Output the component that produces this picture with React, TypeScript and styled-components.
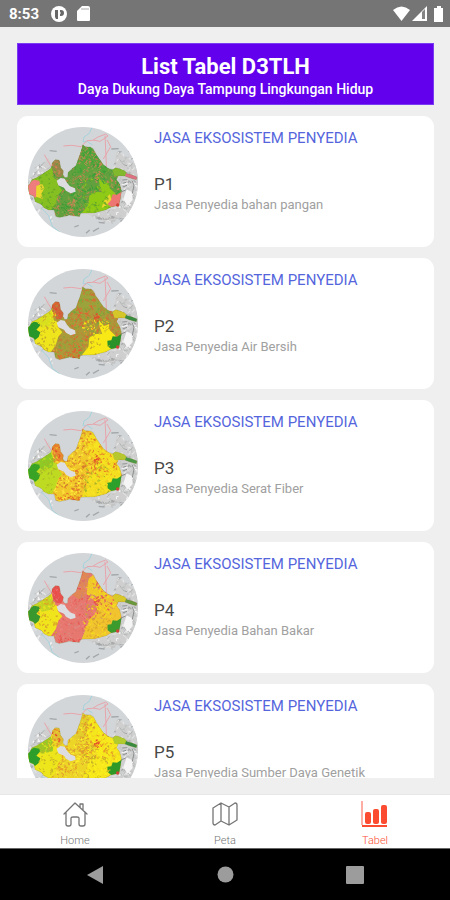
import React from "react";
import styled, { createGlobalStyle } from "styled-components";

const GlobalStyle = createGlobalStyle`
  *, *::before, *::after { box-sizing: border-box; }
  body { margin: 0; background: #efefef; font-family: Roboto, "Liberation Sans", sans-serif; }
  h1, h2, p, ul { margin: 0; padding: 0; }
  button { border: 0; padding: 0; background: none; font: inherit; cursor: pointer; }
`;

const Screen = styled.div`
  display: flex;
  flex-direction: column;
  height: 100vh;
  overflow: hidden;
`;

const StatusBar = styled.header`
  display: flex;
  align-items: center;
  justify-content: space-between;
  height: 27px;
  flex: none;
  padding: 0 6px 0 9px;
  background: #757575;
  color: #fff;
`;

const StatusGroup = styled.div<{ $gap: number }>`
  display: flex;
  align-items: center;
  gap: ${(p) => p.$gap}px;
`;

const Clock = styled.time`
  font-size: 15px;
  line-height: 20px;
  font-weight: 700;
  margin-right: 2px;
`;

const Main = styled.main`
  display: flex;
  flex-direction: column;
  flex: 1;
  min-height: 0;
  padding: 16px 16px 16px 17px;
`;

const Banner = styled.div`
  flex: none;
  padding: 10px 8px 6px;
  background: #6200ee;
  border: 1px solid #7a3cf0;
  color: #fff;
  text-align: center;
`;

const BannerTitle = styled.h1`
  font-size: 22px;
  line-height: 26px;
  font-weight: 700;
`;

const BannerSubtitle = styled.p`
  font-size: 14px;
  line-height: 18px;
  font-weight: 500;
`;

const List = styled.ul`
  display: flex;
  flex-direction: column;
  gap: 11px;
  flex: 1;
  min-height: 0;
  margin-top: 11px;
  overflow: hidden;
  list-style: none;
`;

const Card = styled.li`
  display: flex;
  flex: none;
  gap: 16px;
  padding: 11px 11px 10px;
  background: #fff;
  border-radius: 11px;
`;

const Thumb = styled.svg`
  display: block;
  flex: none;
  width: 110px;
  height: 110px;
  border-radius: 50%;
`;

const CardText = styled.div`
  min-width: 0;
`;

const Category = styled.p`
  font-size: 15px;
  line-height: 22px;
  font-weight: 400;
  color: #5566dd;
`;

const Code = styled.h2`
  margin-top: 24px;
  font-size: 17px;
  line-height: 22px;
  font-weight: 400;
  color: #484848;
`;

const Description = styled.p`
  font-size: 13px;
  line-height: 20px;
  color: #a0a0a0;
`;

const TabBar = styled.nav`
  display: grid;
  grid-template-columns: repeat(3, 1fr);
  flex: none;
  height: 54px;
  background: #fff;
  border-top: 1px solid #e8e8e8;
`;

const Tab = styled.a<{ $active?: boolean }>`
  display: flex;
  flex-direction: column;
  align-items: center;
  gap: 6px;
  padding-top: 5px;
  color: ${(p) => (p.$active ? "#fb4c32" : "#757575")};
  font-size: 11px;
  line-height: 14px;
  font-weight: 300;
  text-decoration: none;
  svg { display: block; width: 28px; height: 28px; }
`;

const SystemNav = styled.footer`
  display: flex;
  align-items: center;
  justify-content: center;
  gap: 82px;
  flex: none;
  height: 52px;
  background: #000;
  border-top: 1px solid #666;
`;

const SystemButton = styled.button`
  width: 48px;
  height: 48px;
  display: grid;
  place-items: center;
`;

type Palette = {
  core: string;
  cores: string[];
  west: string;
  westEdge: string;
  westNorth: string;
  east: string;
  corner: string;
  hook: string;
  tail: string;
  tailEnd: string;
  north: string;
  speckWest: string;
  density: number;
};

const items: { code: string; text: string; palette: Palette }[] = [
  {
    code: "P1",
    text: "Jasa Penyedia bahan pangan",
    palette: {
      core: "#62a03f", cores: ["#3f9c38", "#b3824c", "#7da846", "#c78758", "#37a23b"],
      west: "#86bf22", westEdge: "#ee7c7c", westNorth: "#86bf22", east: "#8fcb16", corner: "#ee7672",
      hook: "#9a8548", tail: "#82b82c", tailEnd: "#df7184", north: "#55a53a", speckWest: "#65a62a", density: 900,
    },
  },
  {
    code: "P2",
    text: "Jasa Penyedia Air Bersih",
    palette: {
      core: "#aa9a3a", cores: ["#d8743a", "#79a63c", "#bc8238", "#8fa63a", "#de6434"],
      west: "#eee51c", westEdge: "#27962b", westNorth: "#c9da20", east: "#f8e916", corner: "#299329",
      hook: "#d0643a", tail: "#d5c62a", tailEnd: "#398b42", north: "#9ca33c", speckWest: "#c6a82b", density: 900,
    },
  },
  {
    code: "P3",
    text: "Jasa Penyedia Serat Fiber",
    palette: {
      core: "#f0c829", cores: ["#e4762a", "#ffe13b", "#cf7a30", "#fff13c", "#e69b25"],
      west: "#bedb22", westEdge: "#39a326", westNorth: "#6ebc29", east: "#f5e51e", corner: "#2d9f2b",
      hook: "#e68a32", tail: "#b7c72e", tailEnd: "#4c9849", north: "#edc92c", speckWest: "#a9b529", density: 900,
    },
  },
  {
    code: "P4",
    text: "Jasa Penyedia Bahan Bakar",
    palette: {
      core: "#e77870", cores: ["#e75955", "#df8881", "#d97169", "#ef807a", "#cf8373"],
      west: "#f0e51d", westEdge: "#38972d", westNorth: "#a9c829", east: "#f4de19", corner: "#3b9b2d",
      hook: "#e9514e", tail: "#d8c828", tailEnd: "#68993c", north: "#e18756", speckWest: "#dba529", density: 500,
    },
  },
  {
    code: "P5",
    text: "Jasa Penyedia Sumber Daya Genetik",
    palette: {
      core: "#edd528", cores: ["#e79a25", "#fff12e", "#dfa02d", "#f2e632", "#d99733"],
      west: "#eee61c", westEdge: "#2c9e29", westNorth: "#65b42b", east: "#faef18", corner: "#2f9928",
      hook: "#e1bd32", tail: "#b1cc2c", tailEnd: "#398b42", north: "#e3cd2b", speckWest: "#c6b127", density: 800,
    },
  },
];

const LAND =
  "M50 228L60 219L66 207L80 201L98 190L112 181L123 173L127 156L136 147L147 148L150 158L151 170L160 181L159 192L164 200L172 200L174 185L186 174L198 165L204 148L210 132L216 112L218 103L226 108L242 109L250 114L258 130L270 148L280 162L294 173L308 177L317 171L330 175L344 180L352 189L365 192L381 199L379 207L360 202L344 196L325 195L320 207L328 218L335 240L331 264L327 284L303 289L288 297L254 306L213 308L208 318L178 314L148 321L137 317L132 298L116 298L102 291L94 281L76 273L71 256L50 248Z";

function makeRandom(seed: number) {
  let state = seed * 7919;
  return () => {
    state = (state * 16807) % 2147483647;
    return state / 2147483647;
  };
}

type Fleck = { d: string; color: string; width: number };

function makeFlecks(seed: number, count: number, colors: string[], box: number[], size: number): Fleck[] {
  const random = makeRandom(seed);
  return Array.from({ length: count }, () => {
    const x = Math.round(box[0] + random() * box[2]);
    const y = Math.round(box[1] + random() * box[3]);
    const step = () => Math.round((random() - 0.5) * size);
    return {
      d: `M${x} ${y}l${step()} ${step()}l${step()} ${step()}`,
      color: colors[Math.floor(random() * colors.length)],
      width: 2 + Math.round(random() * 2),
    };
  });
}

const Flecks = ({ items: flecks }: { items: Fleck[] }) => (
  <>
    {flecks.map((f, i) => (
      <path key={i} d={f.d} stroke={f.color} strokeWidth={f.width} fill="none" />
    ))}
  </>
);

function RegionMap({ code, palette: p, index }: { code: string; palette: Palette; index: number }) {
  const id = `land-${code}`;
  const relief = ["#b3b5b5", "#f4f4f4", "#c2c4c4", "#a4a6a7", "#e4e4e4"];
  const hot = index === 0 ? ["#d98056", "#c98b52"] : index === 3 ? ["#e94c48", "#d8574e"] : ["#e34a2d", "#ef6b25"];
  return (
    <Thumb viewBox="54 49 330 330" role="img" aria-label={`Peta ${code}`}>
      <defs>
        <clipPath id={id}><path d={LAND} /></clipPath>
        <clipPath id={`${id}-east`}><path d="M325 120L390 120L390 330L300 340L240 318L330 285L338 230L305 180Z" /></clipPath>
        <clipPath id={`${id}-west`}><path d="M54 185L125 135L120 175L50 228ZM50 248L105 290L135 330L110 340L50 290Z" /></clipPath>
      </defs>
      <rect x="54" y="49" width="330" height="330" fill="#d3d6d8" />
      <path d="M54 210L116 140L126 170L66 207ZM320 120L390 170L390 305L290 335L230 310L328 290L337 232L310 180Z" fill="#cfcfcf" />
      <g clipPath={`url(#${id}-east)`}><Flecks items={makeFlecks(91, 260, relief, [245, 115, 140, 220], 20)} /></g>
      <g clipPath={`url(#${id}-west)`}><Flecks items={makeFlecks(37, 120, relief, [54, 135, 85, 200], 16)} /></g>
      <path d="M337 208L352 207M338 218L349 215M338 229L351 224M333 244L347 238M366 210L372 223L367 248" stroke="#8c8f91" strokeWidth="3" fill="none" />
      <path d="M340 266L350 236L365 244L368 268L352 285Z" fill="#f5f5f5" />
      <path d="M246 50L238 68L222 79L219 94L231 92L248 103M94 291L116 315L127 347L150 365" stroke="#a5d3dd" strokeWidth="3" fill="none" />
      <path d="M160 106L185 104L213 108L231 90L248 89L264 79L287 70L294 76L270 92L249 88M285 75L288 138L289 169M103 132L115 153L126 171M291 88L302 108L280 145" stroke="#e7a4ac" strokeWidth="3" fill="none" />
      <path d="M119 120L140 122M304 115L326 114M193 349L206 344M228 368L239 358M249 362L267 352M266 335L284 337" stroke="#a2a6a8" strokeWidth="4" />
      <g clipPath={`url(#${id})`}>
        <path d={LAND} fill={p.core} />
        <path d="M180 170L220 100L300 170L278 198L240 160L210 190Z" fill={p.north} />
        <Flecks items={makeFlecks(141 + index * 17, p.density, p.cores, [125, 100, 210, 222], 12)} />
        <path d="M50 220L75 195L125 170L131 202L146 210L143 222L157 239L145 252L137 278L121 300L95 295L50 260Z" fill={p.west} />
        <path d="M50 220L78 195L122 174L131 196L128 218L96 225L84 213Z" fill={p.westNorth} opacity=".6" />
        <path d="M50 220L72 207L88 210L90 219L79 231L91 239L86 253L76 261L50 252Z" fill={p.westEdge} />
        {index < 2 && <path d="M267 203L281 220L294 216L299 232L316 249L326 285L290 308L215 308L235 283L238 255L257 244L277 245L269 224Z" fill={p.east} />}
        {index > 1 && <path d="M235 128L250 114L283 162L320 190L335 225L330 260L287 308L215 308L239 247L262 226L263 203L230 171Z" fill={p.east} opacity=".75" />}
        <Flecks items={makeFlecks(733 + index, index > 1 ? 110 : 0, [p.cores[0], p.cores[4], p.east], [222, 125, 100, 120], 12)} />
        <path d="M292 264L304 263L308 251L321 252L337 242L335 290L307 291L293 281Z" fill={p.corner} />
        <path d="M123 146L154 144L162 185L153 200L139 198L130 185Z" fill={p.hook} />
        <path d="M305 169L330 172L352 185L342 200L313 195Z" fill={p.tail} />
        <path d="M348 187L384 195L380 210L344 199Z" fill={p.tailEnd} />
        {index === 0 && <path d="M79 226L97 219L103 233L94 250L99 265L78 258ZM289 260L300 251L304 267L288 285L275 292L280 275Z" fill="#ead72b" />}
        <Flecks items={makeFlecks(211 + index * 5, 75, [p.speckWest, p.west], [88, 180, 52, 115], 11)} />
        <Flecks items={makeFlecks(311 + index * 5, 75, [p.speckWest, p.east], [222, 200, 75, 105], 11)} />
        <Flecks items={makeFlecks(401, 20, [...hot, p.core], [128, 152, 27, 44], 10)} />
        <Flecks items={makeFlecks(503, index === 0 ? 6 : 12, hot, [256, 183, 18, 25], 9)} />
        <Flecks items={makeFlecks(607, index === 0 ? 6 : 14, hot, [135, 304, 75, 12], 8)} />
      </g>
      <path d={LAND} fill="none" stroke="#6f793a" strokeWidth="1" opacity=".55" />
      <path d="M140 210L152 202L164 204L171 216L180 227L195 233L197 243L182 248L168 240L162 231L145 224Z" fill="#dcdce1" />
      <circle cx="323" cy="283" r="5" fill="#cf4238" />
    </Thumb>
  );
}

export default function App() {
  return (
    <>
      <GlobalStyle />
      <Screen>
        <StatusBar>
          <StatusGroup $gap={10}>
            <Clock>8:53</Clock>
            <svg width="16" height="16" viewBox="0 0 16 16" aria-hidden="true">
              <circle cx="8" cy="8" r="8" fill="#fff" />
              <path d="M4 4h3v9H5L4 11zM9 4h1a3 3 0 0 1 0 6H9V8l1-1-1-1z" fill="#686868" />
            </svg>
            <svg width="13" height="16" viewBox="0 0 13 16" aria-hidden="true">
              <path d="M5 0h6q2 0 2 2v12q0 1-1 1H1q-1 0-1-1V5z" fill="#fff" />
              <path d="M5 2v2M7 2v2M9 2v2M11 2v2" stroke="#aaa" />
            </svg>
          </StatusGroup>
          <StatusGroup $gap={2}>
            <svg width="17" height="15" viewBox="0 0 17 15" aria-hidden="true">
              <path d="M0 4Q8.500-3 17 4L8.500 15z" fill="#fff" />
            </svg>
            <svg width="15" height="15" viewBox="0 0 15 15" aria-hidden="true">
              <path d="M0 15L15 0V15z" fill="#fff" />
              <path d="M10 6L13 3V13H10z" fill="#858585" />
            </svg>
            <svg width="15" height="16" viewBox="0 0 15 16" aria-hidden="true">
              <path d="M8 0h4v2h2v14H5V2h3z" fill="#fff" />
            </svg>
          </StatusGroup>
        </StatusBar>
        <Main>
          <Banner>
            <BannerTitle>List Tabel D3TLH</BannerTitle>
            <BannerSubtitle>Daya Dukung Daya Tampung Lingkungan Hidup</BannerSubtitle>
          </Banner>
          <List>
            {items.map((item, index) => (
              <Card key={item.code}>
                <RegionMap code={item.code} palette={item.palette} index={index} />
                <CardText>
                  <Category>JASA EKSOSISTEM PENYEDIA</Category>
                  <Code>{item.code}</Code>
                  <Description>{item.text}</Description>
                </CardText>
              </Card>
            ))}
          </List>
        </Main>
        <TabBar>
          <Tab href="#home">
            <svg viewBox="0 0 28 28" fill="none" stroke="currentColor" strokeWidth="1.3" strokeLinejoin="round" strokeLinecap="round">
              <path d="M3 14L14 3L26 14M19 7V4H22V10M5 12V24Q5 26 7 26H8Q10 26 10 24V18Q10 17 12 17H16Q18 17 18 18V24Q18 26 20 26H22Q24 26 24 24V12" />
            </svg>
            Home
          </Tab>
          <Tab href="#peta">
            <svg viewBox="0 0 28 28" fill="none" stroke="currentColor" strokeWidth="1.3" strokeLinejoin="round">
              <path d="M2 8L10 3L18 7L24 3Q26 3 26 5V20L18 25L10 21L4 25Q2 25 2 23ZM10 3V21M18 7V25" />
            </svg>
            Peta
          </Tab>
          <Tab href="#tabel" $active aria-current="page">
            <svg viewBox="0 0 28 28">
              <path d="M1 1V25" stroke="#ffada2" strokeWidth="2" />
              <path d="M1 26H26" stroke="currentColor" strokeWidth="2" />
              <g fill="currentColor">
                <rect x="4" y="12" width="6" height="12" rx="2" />
                <rect x="12" y="9" width="6" height="15" rx="2" />
                <rect x="20" y="5" width="6" height="19" rx="2" />
              </g>
            </svg>
            Tabel
          </Tab>
        </TabBar>
        <SystemNav>
          <SystemButton aria-label="Kembali">
            <svg width="16" height="18" viewBox="0 0 16 18"><path d="M0 9L16 0V18Z" fill="#9c9c9c" /></svg>
          </SystemButton>
          <SystemButton aria-label="Beranda">
            <svg width="17" height="17" viewBox="0 0 17 17"><circle cx="8.500" cy="8.500" r="8" fill="#9c9c9c" /></svg>
          </SystemButton>
          <SystemButton aria-label="Ringkasan">
            <svg width="18" height="18" viewBox="0 0 18 18"><rect width="18" height="18" rx="1" fill="#9c9c9c" /></svg>
          </SystemButton>
        </SystemNav>
      </Screen>
    </>
  );
}
